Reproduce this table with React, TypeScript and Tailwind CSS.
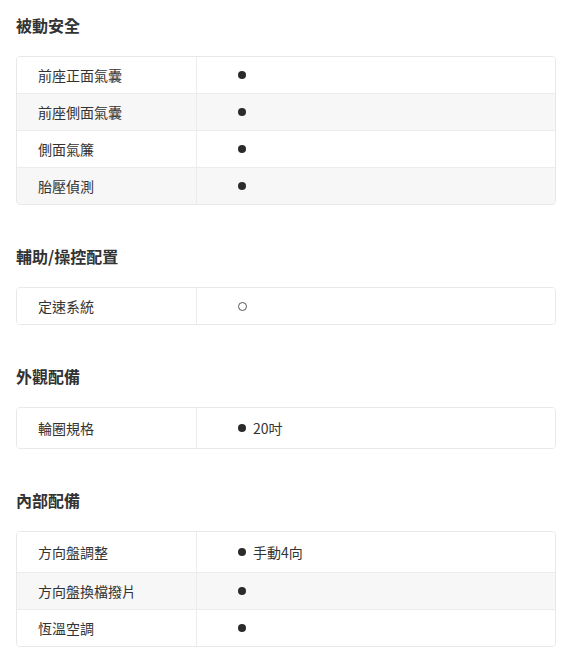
import React from "react";

type Row = { label: string; value: "filled" | "hollow"; text?: string };
type Section = { title: string; rows: Row[] };

const sections: Section[] = [
  {
    title: "被動安全",
    rows: [
      { label: "前座正面氣囊", value: "filled" },
      { label: "前座側面氣囊", value: "filled" },
      { label: "側面氣簾", value: "filled" },
      { label: "胎壓偵測", value: "filled" },
    ],
  },
  {
    title: "輔助/操控配置",
    rows: [{ label: "定速系統", value: "hollow" }],
  },
  {
    title: "外觀配備",
    rows: [{ label: "輪圈規格", value: "filled", text: "20吋" }],
  },
  {
    title: "內部配備",
    rows: [
      { label: "方向盤調整", value: "filled", text: "手動4向" },
      { label: "方向盤換檔撥片", value: "filled" },
      { label: "恆溫空調", value: "filled" },
    ],
  },
];

function Dot({ kind }: { kind: "filled" | "hollow" }) {
  if (kind === "filled") {
    return <span className="inline-block w-[8px] h-[8px] rounded-full bg-[#2b2b2b] shrink-0" />;
  }
  return <span className="inline-block w-[9px] h-[9px] rounded-full border border-[#555] shrink-0" />;
}

export default function App() {
  return (
    <div
      className="w-[568px] bg-white pl-4 pr-3 pt-[13px] pb-4 text-[#333]"
      style={{ fontFamily: '"Noto Sans CJK TC", "Noto Sans", sans-serif' }}
    >
      {sections.map((s, si) => (
        <div key={si} className={si > 0 ? "mt-[39px]" : ""}>
          <h2 className="h-6 leading-6 text-[16px] font-bold text-[#333] mb-[19px]">{s.title}</h2>
          <div className="border border-[#e8e8e8] rounded-[4px] overflow-hidden divide-y divide-[#ececec]">
            {s.rows.map((r, ri) => (
              <div key={ri} className={ri % 2 === 1 ? "bg-[#f7f7f7]" : "bg-white"}>
                <div className={`flex ${r.text ? "h-[40px]" : "h-[36px]"}`}>
                  <div className="w-[180px] shrink-0 border-r border-[#ececec] flex items-center pl-[21px] text-[14px] text-[#333]">
                    {r.label}
                  </div>
                  <div className="flex-1 flex items-center pl-[41px] gap-[7px] text-[14px] text-[#333]">
                    <Dot kind={r.value} />
                    {r.text && <span>{r.text}</span>}
                  </div>
                </div>
              </div>
            ))}
          </div>
        </div>
      ))}
    </div>
  );
}
